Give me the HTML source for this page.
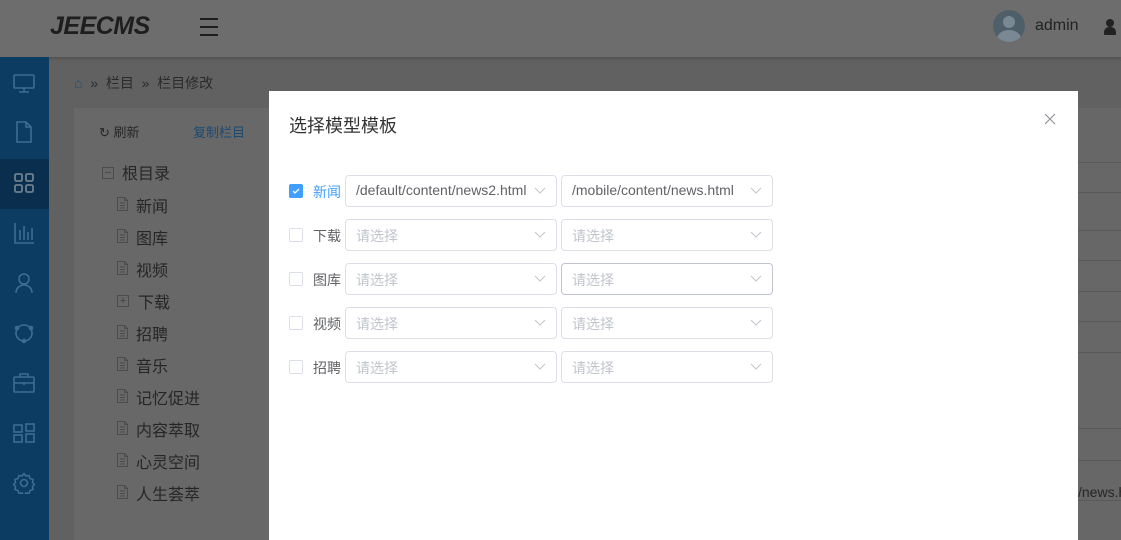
<!DOCTYPE html>
<html><head><meta charset="utf-8"><style>
*{margin:0;padding:0;box-sizing:border-box}
body{width:1121px;height:540px;overflow:hidden;background:#616161;font-family:"Liberation Sans","Noto Sans CJK SC",sans-serif;position:relative}
.hdr{position:absolute;left:0;top:0;width:1121px;height:57px;background:#6d6d6d;box-shadow:0 2px 3px rgba(0,0,0,.15)}
.logo{position:absolute;left:50px;top:12px;font:italic bold 25px "Liberation Sans",sans-serif;color:#1e1e1e;letter-spacing:-0.5px}
.burger{position:absolute;left:200px;top:18px;width:18px}
.burger i{display:block;height:2px;background:#1e1e1e;margin-bottom:6px}
.av{position:absolute;left:993px;top:10px;width:32px;height:32px;border-radius:50%;background:#4f5f6a;overflow:hidden}
.admin{position:absolute;left:1035px;top:17px;font-size:16px;color:#222}
.side{position:absolute;left:0;top:57px;width:49px;height:483px;background:#0c3c62}
.side .act{position:absolute;left:0;top:102px;width:49px;height:50px;background:#0a2f4e}
.side svg{position:absolute;left:13px}
.bc{position:absolute;left:74px;top:73px;font-size:14px;color:#2a2a2a}
.panel{position:absolute;left:74px;top:108px;width:200px;height:432px;background:#686868}
.t{position:absolute;font-size:16px;color:#262626;line-height:20px}
.fi{position:absolute;width:11px;height:14px}
.rl{position:absolute;left:1078px;width:43px;height:1px;background:#5a5a5a}
.dlg{position:absolute;left:269px;top:91px;width:809px;height:449px;background:#fff}
.title{position:absolute;left:20px;top:21px;font-size:18px;color:#333}
.x{position:absolute;left:775px;top:22px}
.row{position:absolute;left:20px;height:32px}
.cb{position:absolute;left:0;top:9px;width:14px;height:14px;border:1px solid #dcdfe6;border-radius:2px;background:#fff}
.cb.on{background:#409eff;border-color:#409eff}
.lbl{position:absolute;left:24px;top:7px;font-size:14px;color:#606266;white-space:nowrap}
.sel{position:absolute;top:0;width:212px;height:32px;border:1px solid #dcdfe6;border-radius:4px;font-size:14px;color:#606266;padding:6px 10px;white-space:nowrap}
.sel.ph{color:#c0c4cc}
.sel svg{position:absolute;right:10px;top:11px}
</style></head><body>
<div class="hdr">
<div class="logo">JEECMS</div>
<div class="burger"><i></i><i></i><i></i></div>
<div class="av"><div style="position:absolute;left:10px;top:6px;width:12px;height:12px;border-radius:50%;background:#7a8893"></div><div style="position:absolute;left:4px;top:20px;width:24px;height:18px;border-radius:50%;background:#7a8893"></div></div>
<div class="admin">admin</div>
<div style="position:absolute;left:1106px;top:19px;width:8px;height:8px;border-radius:50%;background:#222"></div>
<div style="position:absolute;left:1104px;top:27px;width:12px;height:8px;background:#222;border-radius:5px 5px 1px 1px"></div>
</div>
<div class="side">
<div class="act"></div>
<svg style="top:15px" width="22" height="22" viewBox="0 0 22 22" fill="none" stroke="#3d6d92" stroke-width="1.6"><rect x="1" y="3" width="20" height="13" rx="1"/><path d="M11 16v4M6 20h10"/></svg>
<svg style="top:64px" width="22" height="22" viewBox="0 0 22 22" fill="none" stroke="#3d6d92" stroke-width="1.6"><path d="M4 1h9l5 5v15H4z M13 1v5h5"/></svg>
<svg style="top:115px" width="22" height="22" viewBox="0 0 22 22" fill="none" stroke="#6d7f8e" stroke-width="1.8"><rect x="2" y="2" width="7" height="7" rx="1.5"/><rect x="13" y="2" width="7" height="7" rx="1.5"/><rect x="2" y="13" width="7" height="7" rx="1.5"/><rect x="13" y="13" width="7" height="7" rx="1.5"/></svg>
<svg style="top:165px" width="22" height="22" viewBox="0 0 22 22" fill="none" stroke="#3d6d92" stroke-width="1.6"><path d="M2 1v20h19M7 8v10M11 4v14M15 10v8M19 6v12"/></svg>
<svg style="top:215px" width="22" height="22" viewBox="0 0 22 22" fill="none" stroke="#3d6d92" stroke-width="1.6"><circle cx="11" cy="7" r="5"/><path d="M3 21c0-5 4-8 8-8s8 3 8 8"/></svg>
<svg style="top:265px" width="22" height="22" viewBox="0 0 22 22" fill="none" stroke="#3d6d92" stroke-width="1.6"><circle cx="11" cy="11" r="8"/><circle cx="4" cy="6" r="1.5" fill="#3d6d92"/><circle cx="18" cy="6" r="1.5" fill="#3d6d92"/><circle cx="11" cy="19" r="1.5" fill="#3d6d92"/></svg>
<svg style="top:315px" width="22" height="22" viewBox="0 0 22 22" fill="none" stroke="#3d6d92" stroke-width="1.6"><rect x="1" y="5" width="20" height="15" rx="1"/><path d="M1 11h20M7 5V2h8v3M11 10v3"/></svg>
<svg style="top:365px" width="22" height="22" viewBox="0 0 22 22" fill="none" stroke="#3d6d92" stroke-width="1.6"><rect x="1" y="3" width="8" height="7"/><rect x="13" y="2" width="8" height="7"/><rect x="1" y="13" width="8" height="7"/><rect x="13" y="12" width="8" height="8"/></svg>
<svg style="top:415px" width="22" height="22" viewBox="0 0 22 22" fill="none" stroke="#3d6d92" stroke-width="1.6"><circle cx="11" cy="11" r="3.5"/><path d="M11 1.5l2 2.5 3-.5 1 3 3 1-.5 3 2 2-2 2 .5 3-3 1-1 3-3-.5-2 2.5-2-2.5-3 .5-1-3-3-1 .5-3-2-2 2-2-.5-3 3-1 1-3 3 .5z"/></svg>
</div>
<div class="bc"><span style="color:#1f4f78">⌂</span>&nbsp; » &nbsp;栏目 &nbsp;» &nbsp;栏目修改</div>
<div class="panel">
<div class="t" style="left:25px;top:15px;font-size:13px">↻ 刷新</div>
<div class="t" style="left:119px;top:15px;font-size:13px;color:#1c4a72">复制栏目</div>
<div style="position:absolute;left:28px;top:59px;width:12px;height:12px;border:1px solid #4c4c4c"><div style="position:absolute;left:2px;top:4px;width:6px;height:1px;background:#4c4c4c"></div></div>
<div class="t" style="left:48px;top:57px">根目录</div>
</div>
<svg width="0" height="0" style="position:absolute"><defs><symbol id="f" viewBox="0 0 11 14"><path d="M.5.5h7l3 3v10H.5z M7.5.5v3h3 M3 6h5M3 8.5h5M3 11h5" fill="none" stroke="#4c4c4c" stroke-width="1"/></symbol></defs></svg>
<svg class="fi" style="left:117px;top:197px"><use href="#f"/></svg><div class="t" style="left:136px;top:198px">新闻</div>
<svg class="fi" style="left:117px;top:229px"><use href="#f"/></svg><div class="t" style="left:136px;top:230px">图库</div>
<svg class="fi" style="left:117px;top:261px"><use href="#f"/></svg><div class="t" style="left:136px;top:262px">视频</div>
<div style="position:absolute;left:117px;top:295px;width:12px;height:12px;border:1px solid #4c4c4c;font-size:11px;line-height:10px;text-align:center;color:#444">+</div><div class="t" style="left:138px;top:294px">下载</div>
<svg class="fi" style="left:117px;top:325px"><use href="#f"/></svg><div class="t" style="left:136px;top:326px">招聘</div>
<svg class="fi" style="left:117px;top:357px"><use href="#f"/></svg><div class="t" style="left:136px;top:358px">音乐</div>
<svg class="fi" style="left:117px;top:389px"><use href="#f"/></svg><div class="t" style="left:136px;top:390px">记忆促进</div>
<svg class="fi" style="left:117px;top:421px"><use href="#f"/></svg><div class="t" style="left:136px;top:422px">内容萃取</div>
<svg class="fi" style="left:117px;top:453px"><use href="#f"/></svg><div class="t" style="left:136px;top:454px">心灵空间</div>
<svg class="fi" style="left:117px;top:485px"><use href="#f"/></svg><div class="t" style="left:136px;top:486px">人生荟萃</div>
<div style="position:absolute;left:1078px;top:108px;width:43px;height:432px;background:#676767"></div>
<div class="rl" style="top:162px"></div><div class="rl" style="top:192px"></div><div class="rl" style="top:230px"></div><div class="rl" style="top:260px"></div><div class="rl" style="top:291px"></div><div class="rl" style="top:321px"></div><div class="rl" style="top:352px"></div><div class="rl" style="top:428px"></div><div class="rl" style="top:460px"></div><div class="rl" style="top:500px"></div>
<div class="t" style="left:1078px;top:482px;font-size:14px">/news.h</div>
<div class="dlg">
<div class="title">选择模型模板</div>
<svg class="x" width="12" height="12" viewBox="0 0 12 12"><path d="M1 1l10 10M11 1L1 11" stroke="#909399" stroke-width="1.2"/></svg>
<div class="row" style="top:84px"><div class="cb on"><svg width="12" height="12" viewBox="0 0 12 12" style="position:absolute;left:0;top:0"><path d="M3 6l2 2 4-4" stroke="#fff" stroke-width="1.3" fill="none"/></svg></div><div class="lbl" style="color:#409eff">新闻</div>
<div class="sel" style="left:56px">/default/content/news2.html<svg width="12" height="8" viewBox="0 0 12 8"><path d="M1 1l5 5 5-5" stroke="#c0c4cc" fill="none"/></svg></div>
<div class="sel" style="left:272px">/mobile/content/news.html<svg width="12" height="8" viewBox="0 0 12 8"><path d="M1 1l5 5 5-5" stroke="#c0c4cc" fill="none"/></svg></div></div>
<div class="row" style="top:128px"><div class="cb"></div><div class="lbl">下载</div>
<div class="sel ph" style="left:56px">请选择<svg width="12" height="8" viewBox="0 0 12 8"><path d="M1 1l5 5 5-5" stroke="#c0c4cc" fill="none"/></svg></div>
<div class="sel ph" style="left:272px">请选择<svg width="12" height="8" viewBox="0 0 12 8"><path d="M1 1l5 5 5-5" stroke="#c0c4cc" fill="none"/></svg></div></div>
<div class="row" style="top:172px"><div class="cb"></div><div class="lbl">图库</div>
<div class="sel ph" style="left:56px">请选择<svg width="12" height="8" viewBox="0 0 12 8"><path d="M1 1l5 5 5-5" stroke="#c0c4cc" fill="none"/></svg></div>
<div class="sel ph" style="left:272px;border-color:#c0c4cc">请选择<svg width="12" height="8" viewBox="0 0 12 8"><path d="M1 1l5 5 5-5" stroke="#c0c4cc" fill="none"/></svg></div></div>
<div class="row" style="top:216px"><div class="cb"></div><div class="lbl">视频</div>
<div class="sel ph" style="left:56px">请选择<svg width="12" height="8" viewBox="0 0 12 8"><path d="M1 1l5 5 5-5" stroke="#c0c4cc" fill="none"/></svg></div>
<div class="sel ph" style="left:272px">请选择<svg width="12" height="8" viewBox="0 0 12 8"><path d="M1 1l5 5 5-5" stroke="#c0c4cc" fill="none"/></svg></div></div>
<div class="row" style="top:260px"><div class="cb"></div><div class="lbl">招聘</div>
<div class="sel ph" style="left:56px">请选择<svg width="12" height="8" viewBox="0 0 12 8"><path d="M1 1l5 5 5-5" stroke="#c0c4cc" fill="none"/></svg></div>
<div class="sel ph" style="left:272px">请选择<svg width="12" height="8" viewBox="0 0 12 8"><path d="M1 1l5 5 5-5" stroke="#c0c4cc" fill="none"/></svg></div></div>
</div>
</body></html>
